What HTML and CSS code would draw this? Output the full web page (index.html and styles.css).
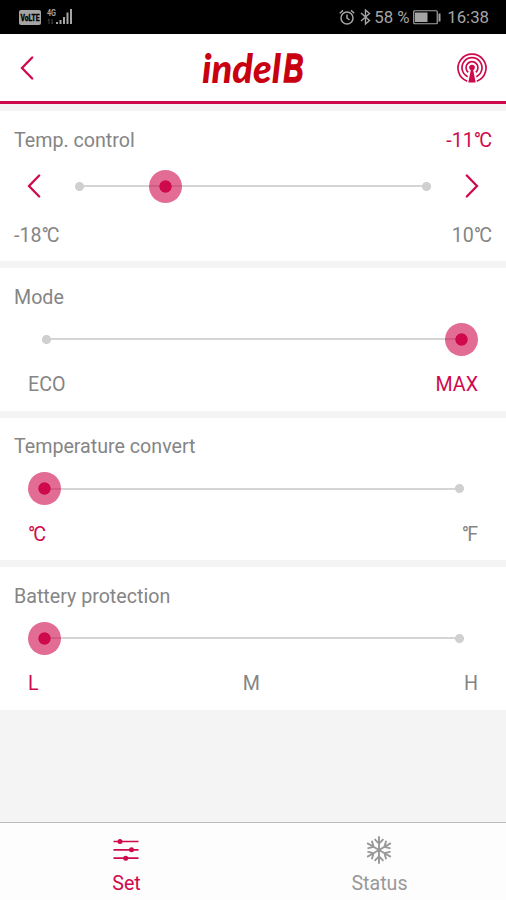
FILE: index.html
```html
<!DOCTYPE html>
<html lang="en">
<head>
<meta charset="utf-8">
<title>indel B</title>
<link rel="stylesheet" href="styles.css">
</head>
<body>
<div class="statusbar">
  <svg width="22" height="15" viewBox="0 0 22 15"><rect width="22" height="15" rx="2" fill="#a5a5a5"/><text x="1.5" y="11" textLength="19" lengthAdjust="spacingAndGlyphs" class="volte-text">VoLTE</text></svg>
  <svg class="signal" width="26" height="18" viewBox="0 0 26 18">
    <text x="0" y="8" textLength="9" lengthAdjust="spacingAndGlyphs" class="net-text">4G</text>
    <path d="M2 11v5M1 12.500l1-1.500M5 11v5l1-1.500" stroke="#444" fill="none"/>
    <path d="M10 16v-2M13.500 16v-4M17 16v-7M20.500 16V4.500M24 16V1" stroke="#a5a5a5" stroke-width="2"/>
  </svg>
  <div class="status-right">
    <svg width="16" height="17" viewBox="0 0 16 17" fill="none" stroke="#a5a5a5" stroke-width="1.500"><circle cx="8" cy="9" r="6"/><path d="M8 5.500V9l2.500 2M.8 4.200L4 1.400M15.200 4.200L12 1.400"/></svg>
    <svg class="bluetooth" width="11" height="16" viewBox="0 0 11 16" fill="none" stroke="#a5a5a5" stroke-width="1.400"><path d="M1 4l8.500 7.500L5.500 15V1l4 3.500L1 12"/></svg>
    <span class="percent">58 %</span>
    <svg width="28" height="15" viewBox="0 0 28 15"><rect x=".75" y=".75" width="23.500" height="13" rx="1" fill="none" stroke="#a5a5a5" stroke-width="1.200"/><rect x="2" y="2.500" width="12.500" height="9.500" fill="#a5a5a5"/><path d="M26.500 3.500v8" stroke="#a5a5a5" stroke-width="2"/></svg>
    <span class="time">16:38</span>
  </div>
</div>

<header class="header">
  <svg width="14" height="24" viewBox="0 0 14 24"><path class="chev" d="M12.200 1.500L2 12l10.200 10.500"/></svg>
  <svg class="logo" width="104" height="58" viewBox="0 -9 104 58">
    <text x="1" y="35" textLength="79" lengthAdjust="spacingAndGlyphs" class="logo-word">indel</text>
    <text x="82.500" y="34.300" textLength="20" lengthAdjust="spacingAndGlyphs" class="logo-b">B</text>
  </svg>
  <svg width="30" height="30" viewBox="0 0 30 30" fill="none" stroke="#cf0a4c" stroke-width="1.700">
    <path d="M10.200 28.200A14 14 0 1 1 19.800 28.200"/>
    <path d="M10.700 23.700A10 10 0 1 1 19.300 23.700"/>
    <path d="M11.200 19.300A6 6 0 1 1 18.800 19.300"/>
    <circle cx="15" cy="14.500" r="2.800" fill="#cf0a4c" stroke="none"/>
    <path d="M14 16h2l2.700 13.500h-7.400z" fill="#cf0a4c" stroke="none"/>
  </svg>
</header>

<main class="settings">
  <section class="card card-temp">
    <div class="title"><span>Temp. control</span><span class="active">-11<span class="deg">°</span>C</span></div>
    <div class="stepper">
      <svg width="14" height="24" viewBox="0 0 14 24"><path class="chev" d="M12.200 1.500L2 12l10.200 10.500"/></svg>
      <div class="track"><i class="thumb thumb-temp"></i></div>
      <svg width="14" height="24" viewBox="0 0 14 24"><path class="chev" d="M1.800 1.500L12 12 1.800 22.500"/></svg>
    </div>
    <div class="range"><span>-18<span class="deg">°</span>C</span><span>10<span class="deg">°</span>C</span></div>
  </section>
  <section class="card">
    <div class="title">Mode</div>
    <div class="slider"><div class="track"><i class="thumb thumb-end"></i></div></div>
    <div class="options"><span>ECO</span><span class="active">MAX</span></div>
  </section>
  <section class="card">
    <div class="title">Temperature convert</div>
    <div class="slider"><div class="track"><i class="thumb thumb-start"></i></div></div>
    <div class="options"><span class="active"><span class="deg">°</span>C</span><span><span class="deg">°</span>F</span></div>
  </section>
  <section class="card">
    <div class="title">Battery protection</div>
    <div class="slider"><div class="track"><i class="thumb thumb-start"></i></div></div>
    <div class="options"><span class="active">L</span><span>M</span><span>H</span></div>
  </section>
</main>

<nav class="tabs">
  <div class="tab active">
    <svg width="28" height="28" viewBox="0 0 28 28" stroke="#cf0a4c" stroke-width="1.700" fill="#cf0a4c"><path d="M1.500 5.500h25M1.500 13.800h25M1.500 22.200h25"/><g stroke="none"><circle cx="8" cy="5.500" r="2.500"/><circle cx="19.500" cy="13.800" r="2.500"/><circle cx="13.700" cy="22.200" r="2.500"/></g></svg>
    <span>Set</span>
  </div>
  <div class="tab">
    <svg width="28" height="28" viewBox="-14 -14 28 28" fill="none" stroke="#999" stroke-width="1.900">
      <defs><path id="arm" d="M0 0V-13.700M-4.400-10.800L0-6.300l4.400-4.500"/></defs>
      <use href="#arm"/><use href="#arm" transform="rotate(60)"/><use href="#arm" transform="rotate(120)"/><use href="#arm" transform="rotate(180)"/><use href="#arm" transform="rotate(240)"/><use href="#arm" transform="rotate(300)"/>
      <circle r="2.200" fill="#999" stroke="none"/>
    </svg>
    <span>Status</span>
  </div>
</nav>
</body>
</html>
```
FILE: styles.css
```css
* { box-sizing: border-box; }
body {
  margin: 0;
  height: 900px;
  display: flex;
  flex-direction: column;
  overflow: hidden;
  background: #f4f4f4;
  color: #858585;
  font: 19.650px/24px Roboto, sans-serif;
}
svg { display: block; flex: none; overflow: visible; }
.statusbar {
  height: 34px;
  flex: none;
  display: flex;
  align-items: center;
  padding: 0 17px 0 19px;
  background: #000;
  color: #a5a5a5;
  font-size: 16.800px;
}
.volte-text { font: bold 8.500px Roboto, sans-serif; fill: #000; stroke: #000; stroke-width: .4px; }
.signal { margin-left: 6px; }
.net-text { font: bold 9px Roboto, sans-serif; fill: #a5a5a5; }
.status-right { margin-left: auto; display: flex; align-items: center; }
.bluetooth { margin: 0 3px 0 5px; }
.percent { width: 39px; white-space: nowrap; }
.time { margin-left: 6px; }
.header {
  height: 70px;
  flex: none;
  display: flex;
  align-items: center;
  justify-content: space-between;
  padding: 1px 19px 0 20px;
  margin-bottom: 7px;
  border-bottom: 3px solid #cf0a4c;
  background: #fff;
}
.logo { margin-left: 15px; }
.logo-word { font: italic 900 40px Lato, sans-serif; fill: #c8000f; }
.logo-b { font: italic bold 40px "Liberation Sans", sans-serif; fill: #c8000f; stroke: #c8000f; stroke-width: 1.500px; }
.chev { fill: none; stroke: #cf0a4c; stroke-width: 2.300; stroke-linecap: round; stroke-linejoin: miter; }
.settings { display: flex; flex-direction: column; gap: 7px; }
.card {
  height: 142.500px;
  padding: 17.500px 14px 0;
  background: #fff;
}
.card-temp { height: 150px; padding-top: 18px; }
.title, .range, .options, .stepper { display: flex; justify-content: space-between; }
.active { color: #cf0a4c; }
.deg { letter-spacing: -2px; }
.stepper { height: 34px; margin: 16px 13px 21px; align-items: center; }
.stepper .track { width: 356px; }
.slider { margin: 13.300px 14px 17.700px; height: 33px; display: flex; align-items: center; }
.slider .track { flex: 1; margin: 0 14px 0 13px; }
.card:nth-child(2) .track { margin: 0 13px 0 14px; }
.options { padding: 0 14px; }
.track {
  position: relative;
  height: 9px;
  background:
    radial-gradient(circle at 4.500px 4.500px, #d0d0d0 4.200px, transparent 4.800px),
    radial-gradient(circle at calc(100% - 4.500px) 4.500px, #d0d0d0 4.200px, transparent 4.800px),
    linear-gradient(#d5d5d5, #d5d5d5) center / calc(100% - 8px) 2px no-repeat;
}
.thumb {
  position: absolute;
  top: -12px;
  width: 33px;
  height: 33px;
  border-radius: 50%;
  background: radial-gradient(circle, #cf0a4c 5.800px, rgba(207, 10, 76, .6) 6.500px);
}
.thumb-temp { left: 74px; }
.thumb-start { left: -13px; }
.thumb-end { right: -13px; }
.tabs {
  display: flex;
  height: 78px;
  flex: none;
  margin-top: auto;
  border-top: 1px solid #bbb;
  background: #fdfdfd;
}
.tab {
  flex: 1;
  display: flex;
  flex-direction: column;
  align-items: center;
  gap: 8px;
  padding-top: 13px;
  color: #999;
}
.tab svg { margin-right: 1px; }
.tab.active { color: #cf0a4c; }
```
